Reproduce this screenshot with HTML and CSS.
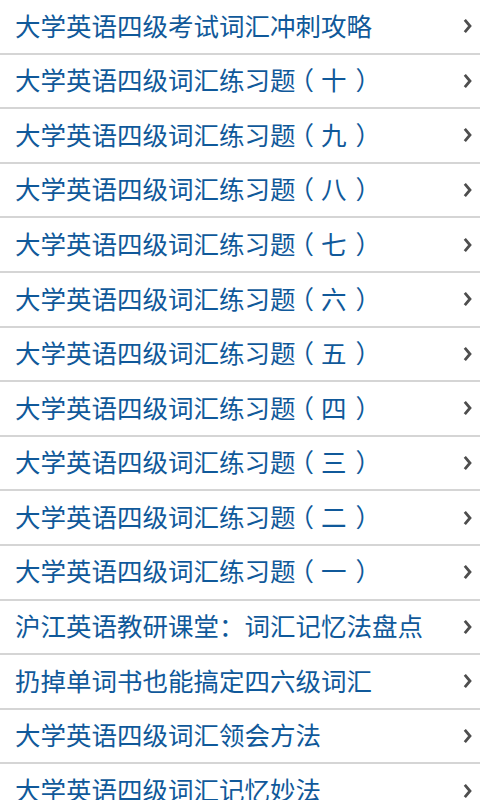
FILE: index.html
```html
<!DOCTYPE html>
<html lang="zh-CN">
<head>
<meta charset="utf-8">
<link rel="stylesheet" href="styles.css">
</head>
<body>
<ul class="list">
  <li class="item"><span class="title">大学英语四级考试词汇冲刺攻略</span><svg class="chev" viewBox="0 0 9 16"><polyline points="1.8,1.8 7,8 1.8,14.2"/></svg></li>
  <li class="item"><span class="title">大学英语四级词汇练习题<span class="lp">（</span>十<span class="rp">）</span></span><svg class="chev" viewBox="0 0 9 16"><polyline points="1.8,1.8 7,8 1.8,14.2"/></svg></li>
  <li class="item"><span class="title">大学英语四级词汇练习题<span class="lp">（</span>九<span class="rp">）</span></span><svg class="chev" viewBox="0 0 9 16"><polyline points="1.8,1.8 7,8 1.8,14.2"/></svg></li>
  <li class="item"><span class="title">大学英语四级词汇练习题<span class="lp">（</span>八<span class="rp">）</span></span><svg class="chev" viewBox="0 0 9 16"><polyline points="1.8,1.8 7,8 1.8,14.2"/></svg></li>
  <li class="item"><span class="title">大学英语四级词汇练习题<span class="lp">（</span>七<span class="rp">）</span></span><svg class="chev" viewBox="0 0 9 16"><polyline points="1.8,1.8 7,8 1.8,14.2"/></svg></li>
  <li class="item"><span class="title">大学英语四级词汇练习题<span class="lp">（</span>六<span class="rp">）</span></span><svg class="chev" viewBox="0 0 9 16"><polyline points="1.8,1.8 7,8 1.8,14.2"/></svg></li>
  <li class="item"><span class="title">大学英语四级词汇练习题<span class="lp">（</span>五<span class="rp">）</span></span><svg class="chev" viewBox="0 0 9 16"><polyline points="1.8,1.8 7,8 1.8,14.2"/></svg></li>
  <li class="item"><span class="title">大学英语四级词汇练习题<span class="lp">（</span>四<span class="rp">）</span></span><svg class="chev" viewBox="0 0 9 16"><polyline points="1.8,1.8 7,8 1.8,14.2"/></svg></li>
  <li class="item"><span class="title">大学英语四级词汇练习题<span class="lp">（</span>三<span class="rp">）</span></span><svg class="chev" viewBox="0 0 9 16"><polyline points="1.8,1.8 7,8 1.8,14.2"/></svg></li>
  <li class="item"><span class="title">大学英语四级词汇练习题<span class="lp">（</span>二<span class="rp">）</span></span><svg class="chev" viewBox="0 0 9 16"><polyline points="1.8,1.8 7,8 1.8,14.2"/></svg></li>
  <li class="item"><span class="title">大学英语四级词汇练习题<span class="lp">（</span>一<span class="rp">）</span></span><svg class="chev" viewBox="0 0 9 16"><polyline points="1.8,1.8 7,8 1.8,14.2"/></svg></li>
  <li class="item"><span class="title">沪江英语教研课堂：词汇记忆法盘点</span><svg class="chev" viewBox="0 0 9 16"><polyline points="1.8,1.8 7,8 1.8,14.2"/></svg></li>
  <li class="item"><span class="title">扔掉单词书也能搞定四六级词汇</span><svg class="chev" viewBox="0 0 9 16"><polyline points="1.8,1.8 7,8 1.8,14.2"/></svg></li>
  <li class="item"><span class="title">大学英语四级词汇领会方法</span><svg class="chev" viewBox="0 0 9 16"><polyline points="1.8,1.8 7,8 1.8,14.2"/></svg></li>
  <li class="item"><span class="title">大学英语四级词汇记忆妙法</span><svg class="chev" viewBox="0 0 9 16"><polyline points="1.8,1.8 7,8 1.8,14.2"/></svg></li>
</ul>
</body>
</html>
```
FILE: styles.css
```css
html, body {
  margin: 0;
  padding: 0;
  background: #ffffff;
  overflow: hidden;
}
.list {
  list-style: none;
  margin: 0;
  padding: 0;
}
.item {
  display: flex;
  align-items: center;
  justify-content: space-between;
  height: 52.6px;
  border-bottom: 2px solid #d5d5d5;
  padding: 0 8px 0 15px;
  box-sizing: content-box;
}
.title {
  font-family: "Noto Sans CJK SC", "Noto Sans", sans-serif;
  font-size: 25.5px;
  line-height: 1;
  color: #10599a;
  white-space: nowrap;
  padding-bottom: 4px;
}
.lp {
  font-feature-settings: "halt";
  padding-left: 5.75px;
  padding-right: 7px;
}
.rp {
  font-feature-settings: "halt";
  padding-left: 9px;
  padding-right: 3.75px;
}
.chev {
  width: 9px;
  height: 16px;
  flex: none;
}
.chev polyline {
  fill: none;
  stroke: #4e4e4e;
  stroke-width: 2.8;
}
```
